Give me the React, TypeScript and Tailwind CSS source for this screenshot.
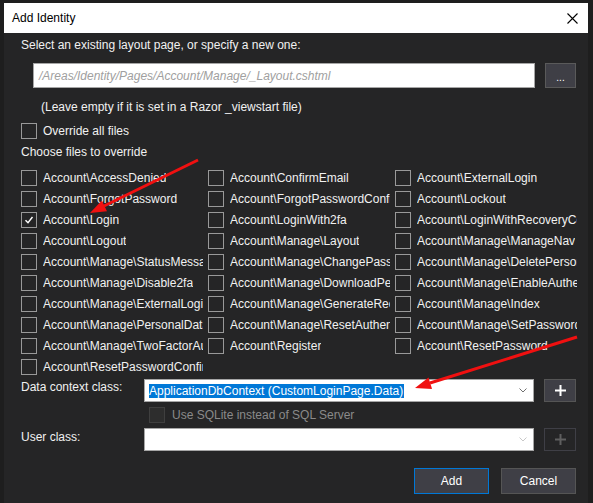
const files: [string, boolean?][] = [
  ['Account\\AccessDenied'],
  ['Account\\ConfirmEmail'],
  ['Account\\ExternalLogin'],
  ['Account\\ForgotPassword'],
  ['Account\\ForgotPasswordConfirmation'],
  ['Account\\Lockout'],
  ['Account\\Login', true],
  ['Account\\LoginWith2fa'],
  ['Account\\LoginWithRecoveryCode'],
  ['Account\\Logout'],
  ['Account\\Manage\\Layout'],
  ['Account\\Manage\\ManageNav'],
  ['Account\\Manage\\StatusMessage'],
  ['Account\\Manage\\ChangePassword'],
  ['Account\\Manage\\DeletePersonalData'],
  ['Account\\Manage\\Disable2fa'],
  ['Account\\Manage\\DownloadPersonalData'],
  ['Account\\Manage\\EnableAuthenticator'],
  ['Account\\Manage\\ExternalLogins'],
  ['Account\\Manage\\GenerateRecoveryCodes'],
  ['Account\\Manage\\Index'],
  ['Account\\Manage\\PersonalData'],
  ['Account\\Manage\\ResetAuthenticator'],
  ['Account\\Manage\\SetPassword'],
  ['Account\\Manage\\TwoFactorAuthentication'],
  ['Account\\Register'],
  ['Account\\ResetPassword'],
  ['Account\\ResetPasswordConfirmation'],
]

function Check({ checked }: { checked?: boolean }) {
  return (
    <span className="flex h-[16px] w-[16px] shrink-0 items-center justify-center border border-[#999999]">
      {checked && (
        <svg width="10" height="10" viewBox="0 0 10 10">
          <path d="M1.5 5.2 L4 7.8 L8.5 2" fill="none" stroke="#ffffff" strokeWidth="1.4" />
        </svg>
      )}
    </span>
  )
}

function Chevron({ color }: { color: string }) {
  return (
    <svg width="8" height="5" viewBox="0 0 8 5">
      <path d="M0.5 0.5 L4 4 L7.5 0.5" fill="none" stroke={color} strokeWidth="1" />
    </svg>
  )
}

function Plus({ disabled }: { disabled?: boolean }) {
  return (
    <button
      className={
        disabled
          ? 'flex h-[23px] w-[32px] items-center justify-center border border-[#3f3f46] bg-[#252526]'
          : 'flex h-[23px] w-[32px] items-center justify-center border border-[#555555] bg-[#3f3f46]'
      }
    >
      <svg width="11" height="11" viewBox="0 0 11 11">
        <path d="M5.5 0 V11 M0 5.5 H11" stroke={disabled ? '#5f5f5f' : '#ffffff'} strokeWidth="2" />
      </svg>
    </button>
  )
}

export default function App() {
  return (
    <div
      className="relative h-[503px] w-[593px] overflow-hidden bg-[#1e1e1e] pl-[4px] pr-[5px] pt-[3px] text-[12px] leading-[16px] text-[#f1f1f1]"
      style={{ fontFamily: '"Liberation Sans", Arial, sans-serif' }}
    >
      {/* title bar */}
      <div className="flex h-[30px] items-center justify-between bg-white pl-[8px] pr-[10px] text-black">
        <span>Add Identity</span>
        <svg width="11" height="11" viewBox="0 0 11 11">
          <path d="M0.5 0.5 L10.5 10.5 M10.5 0.5 L0.5 10.5" stroke="#000" strokeWidth="1.1" />
        </svg>
      </div>

      {/* body */}
      <div className="flex h-[470px] flex-col bg-[#252526] pl-[17px] pr-[12px]">
        <div className="mt-[4px] h-[16px]">Select an existing layout page, or specify a new one:</div>

        <div className="mt-[10px] flex h-[25px] items-center">
          <div className="ml-[12px] flex h-[25px] w-[502px] items-center border border-[#a6a6a6] bg-white pl-[5px] italic text-[#a0a0a0]">
            /Areas/Identity/Pages/Account/Manage/_Layout.cshtml
          </div>
          <button className="ml-[10px] flex h-[25px] w-[31px] items-end justify-center border border-[#5a5a5a] bg-[#3f3f46] pb-[4px] text-[10px] leading-[10px] text-white">
            ...
          </button>
        </div>

        <div className="ml-[20px] mt-[11px] h-[16px]">(Leave empty if it is set in a Razor _viewstart file)</div>

        <div className="mt-[8px] flex h-[16px] items-center gap-[6px]">
          <Check />
          <span>Override all files</span>
        </div>

        <div className="mt-[5px] h-[16px]">Choose files to override</div>

        <div className="mt-[10px] grid grid-cols-[182px_182px_182px] gap-x-[5px] gap-y-[5px]">
          {files.map(([name, checked]) => (
            <div key={name} className="flex h-[16px] items-center gap-[6px] overflow-hidden">
              <Check checked={checked} />
              <span className="overflow-hidden whitespace-nowrap">{name}</span>
            </div>
          ))}
        </div>

        <div className="mt-[4px] flex h-[23px]">
          <span className="w-[123px]">Data context class:</span>
          <div className="flex h-[23px] w-[390px] items-center justify-between border border-[#a6a6a6] bg-white pl-[4px] pr-[6px]">
            <span className="bg-[#0078d7] pr-[1px] leading-[14px] text-white">ApplicationDbContext (CustomLoginPage.Data)</span>
            <Chevron color="#707070" />
          </div>
          <div className="ml-[10px]">
            <Plus />
          </div>
        </div>

        <div className="ml-[128px] mt-[5px] flex h-[16px] items-center gap-[7px] text-[#8a8a8a]">
          <span className="h-[16px] w-[16px] border border-[#3f3f3f] bg-[#2d2d2d]" />
          <span>Use SQLite instead of SQL Server</span>
        </div>

        <div className="mt-[5px] flex h-[23px]">
          <span className="w-[123px] pt-[1px]">User class:</span>
          <div className="flex h-[23px] w-[390px] items-center justify-end border border-[#a6a6a6] bg-white pr-[6px]">
            <Chevron color="#c8c8c8" />
          </div>
          <div className="ml-[10px]">
            <Plus disabled />
          </div>
        </div>

        <div className="mt-[17px] flex justify-end gap-[12px]">
          <button className="h-[26px] w-[75px] border border-[#0078d7] bg-[#3f3f46] text-white">Add</button>
          <button className="h-[26px] w-[75px] border border-[#555555] bg-[#3f3f46] text-white">Cancel</button>
        </div>
      </div>

      {/* red annotation arrows */}
      <svg className="pointer-events-none absolute left-0 top-0" width="593" height="503">
        <line x1="198" y1="160" x2="104" y2="206" stroke="#f01010" strokeWidth="3" />
        <polygon points="90,213 107,211.3 101.8,200.5" fill="#f01010" />
        <line x1="577" y1="337" x2="430" y2="383" stroke="#f01010" strokeWidth="3" />
        <polygon points="415,388 432.1,388.9 428.5,377.5" fill="#f01010" />
      </svg>
    </div>
  )
}
